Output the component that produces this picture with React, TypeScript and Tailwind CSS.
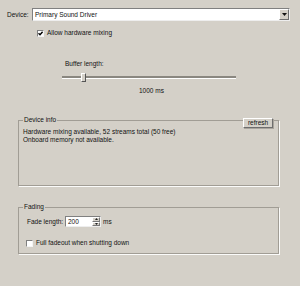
import React from 'react'

const Check = ({ checked }: { checked?: boolean }) => (
  <div className="w-[7px] h-[7px] bg-white border border-t-[#808080] border-l-[#808080] border-b-[#f4f4f4] border-r-[#f4f4f4] flex items-center justify-center shrink-0">
    {checked && (
      <svg width="5" height="5" viewBox="0 0 5 5">
        <path d="M0.5 2.2 L2 3.8 L4.6 0.8" stroke="#000" strokeWidth="1.4" fill="none" />
      </svg>
    )}
  </div>
)

export default function App() {
  return (
    <div className="w-[300px] h-[286px] bg-[#d4d0c8] font-['Liberation_Sans',Arial,sans-serif] text-[6.5px] leading-[8px] text-[#111] overflow-hidden">
      {/* device selector */}
      <div className="flex items-center pt-[8px] pl-[7px]">
        <span className="w-[25px]">Device:</span>
        <div className="w-[258px] h-[13px] bg-white border border-t-[#808080] border-l-[#808080] border-b-[#eeeeee] border-r-[#eeeeee] flex items-center justify-between">
          <span className="pl-[2px]">Primary Sound Driver</span>
          <div className="w-[10px] h-[11px] bg-[#d4d0c8] border border-t-white border-l-white border-b-[#6e6e6e] border-r-[#6e6e6e] flex items-center justify-center">
            <svg width="5" height="3" viewBox="0 0 5 3">
              <path d="M0 0 H5 L2.5 3 Z" fill="#111" />
            </svg>
          </div>
        </div>
      </div>

      <div className="flex items-center gap-[3px] mt-[8px] ml-[37px]">
        <Check checked />
        <span>Allow hardware mixing</span>
      </div>

      {/* buffer length slider */}
      <div className="mt-[23px] ml-[65px]">Buffer length:</div>
      <div className="relative mt-[5px] ml-[62px] w-[174px] h-[9px]">
        <div className="pt-[3px]">
          <div className="h-[3px] border-t-[2px] border-t-[#8a8780] border-b border-b-white" />
        </div>
        <div className="absolute left-[19px] top-0 w-[5px] h-[9px] bg-[#d4d0c8] border border-t-white border-l-white border-b-[#555] border-r-[#555]" />
      </div>
      <div className="mt-[5px] ml-[139px]">1000 ms</div>

      {/* device info group */}
      <fieldset className="relative mt-[21px] ml-[18px] w-[261px] h-[70px] border border-[#a19d95] shadow-[1px_1px_0_#fbfbfa]">
        <legend className="ml-[4px] px-[1px] leading-[8px]">Device info</legend>
        <button className="absolute right-[5px] top-[-6px] w-[30px] h-[10px] bg-[#d4d0c8] border border-t-white border-l-white border-b-[#6e6e6e] border-r-[#6e6e6e] shadow-[1px_1px_0_#a8a49c] text-[6.5px] leading-[8px] flex items-center justify-center">
          refresh
        </button>
        <div className="pt-[4px] pl-[4px]">
          <div>Hardware mixing available, 52 streams total (50 free)</div>
          <div>Onboard memory not available.</div>
        </div>
      </fieldset>

      {/* fading group */}
      <fieldset className="mt-[17px] ml-[18px] w-[261px] h-[51px] border border-[#a19d95] shadow-[1px_1px_0_#fbfbfa]">
        <legend className="ml-[4px] px-[1px] leading-[8px]">Fading</legend>
        <div className="flex items-center pt-[5px] pl-[8px]">
          <span className="w-[38px]">Fade length:</span>
          <div className="w-[36px] h-[11px] bg-white border border-t-[#808080] border-l-[#808080] border-b-[#eeeeee] border-r-[#eeeeee] flex items-center justify-between">
            <span className="pl-[2px]">200</span>
            <div className="w-[8px] h-[9px] flex flex-col">
              <div className="h-[4.5px] bg-[#d4d0c8] border-[0.5px] border-t-white border-l-white border-b-[#777] border-r-[#777] flex items-center justify-center">
                <svg width="3" height="2" viewBox="0 0 3 2"><path d="M0 2 H3 L1.5 0 Z" fill="#222" /></svg>
              </div>
              <div className="h-[4.5px] bg-[#d4d0c8] border-[0.5px] border-t-white border-l-white border-b-[#777] border-r-[#777] flex items-center justify-center">
                <svg width="3" height="2" viewBox="0 0 3 2"><path d="M0 0 H3 L1.5 2 Z" fill="#222" /></svg>
              </div>
            </div>
          </div>
          <span className="ml-[2px]">ms</span>
        </div>
        <div className="flex items-center gap-[3px] mt-[12px] pl-[7px]">
          <Check />
          <span>Full fadeout when shutting down</span>
        </div>
      </fieldset>
    </div>
  )
}
